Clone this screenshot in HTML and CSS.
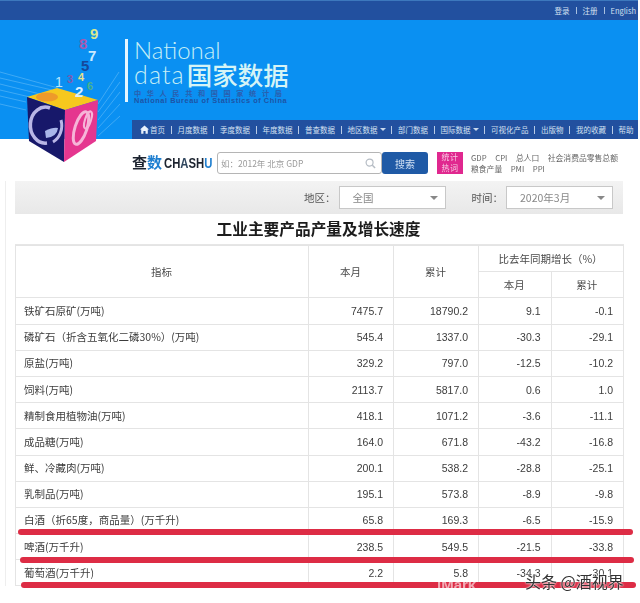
FILE: index.html
```html
<!DOCTYPE html>
<html lang="zh">
<head>
<meta charset="utf-8">
<title>国家数据</title>
<link rel="stylesheet" href="styles.css">
</head>
<body>
<div class="page">
  <header class="top">
    <div class="topbar"><span>登录</span><i></i><span>注册</span><i></i><span>English</span></div>
    <div class="hero">
      <div class="brand">
        <div class="brand-bar"></div>
        <div class="brand-text">
          <div class="b-en">National</div>
          <div class="b-line"><span class="b-en b-data">data</span><span class="b-cn">国家数据</span></div>
          <div class="b-sub1">中华人民共和国国家统计局</div>
          <div class="b-sub2">National Bureau of Statistics of China</div>
        </div>
      </div>
      <nav class="nav">
        <svg class="home" viewBox="0 0 12 11"><path d="M6 0 0 5.6h1.6V11h3V7.4h2.8V11h3V5.6H12z" fill="#e8f1fb"/></svg>
        <a>首页</a><i></i><a>月度数据</a><i></i><a>季度数据</a><i></i><a>年度数据</a><i></i><a>普查数据</a><i></i><a>地区数据<b></b></a><i></i><a>部门数据</a><i></i><a>国际数据<b></b></a><i></i><a>可视化产品</a><i></i><a>出版物</a><i></i><a>我的收藏</a><i></i><a>帮助</a>
      </nav>
    </div>
    <svg class="cube" viewBox="0 0 125 165">
      <g stroke="#8fd0fa" stroke-width="0.8" opacity="0.5" fill="none">
        <path d="M0 72 58 88M0 78 52 90M0 84 40 94M0 90 30 97M0 96 26 102M0 104 26 110"/>
        <path d="M98 104 119 72M98 112 120 82M98 120 120 92M98 128 120 104M98 136 120 116"/>
      </g>
      <polygon points="27,97 57,88 98,100 65,110" fill="#f6c81e"/>
      <ellipse cx="47" cy="97" rx="11" ry="4.5" fill="#ee9a2a"/>
      <polygon points="27,97 65,110 64,162 29,141" fill="#17186a"/>
      <polygon points="65,110 98,100 96,141 64,162" fill="#e5368f"/>
      <path d="M50 108A15 18 0 1 0 47 143" fill="none" stroke="#b9b6e6" stroke-width="3.5"/>
      <path d="M61 120A15 18 0 0 1 53 142" fill="none" stroke="#b9b6e6" stroke-width="3"/>
      <path d="M45 131q8-4 13-3q-1 9-12 10z" fill="#a9b6ea"/>
      <ellipse cx="81" cy="128" rx="6" ry="17" fill="none" stroke="#f6b5d8" stroke-width="3" transform="rotate(18 81 128)"/>
      <ellipse cx="88" cy="120" rx="3" ry="9" fill="none" stroke="#f6b5d8" stroke-width="2" transform="rotate(18 88 120)"/>
      <text x="55" y="87" class="n1" fill="#b9e6ff">1</text>
      <text x="75" y="97" class="n2" fill="#d9f0ff">2</text>
      <text x="67" y="83" class="n3" fill="#7f5ab0">3</text>
      <text x="78" y="81" class="n3" fill="#e7e08a">4</text>
      <text x="81" y="71" class="n2" fill="#16489a">5</text>
      <text x="87" y="90" class="n3" fill="#49b28c">6</text>
      <text x="88" y="61" class="n2" fill="#c9eaff">7</text>
      <text x="79" y="49" class="n2" fill="#a85ab0">8</text>
      <text x="90" y="39" class="n2" fill="#d8e890">9</text>
    </svg>
  </header>

  <div class="search-row">
    <div class="cs-logo"><span class="cs-a">查</span><span class="cs-b">数</span><span class="cs-en"><span class="cs-a">CH</span><span class="cs-c">A</span><span class="cs-a">SH</span><span class="cs-b">U</span></span></div>
    <div class="search-box"><span>如：2012年 北京 GDP</span>
      <svg class="mag" viewBox="0 0 12 12"><circle cx="5" cy="5" r="3.8" fill="none" stroke="#b5bcc4" stroke-width="1.3"/><path d="M8 8l3 3" stroke="#b5bcc4" stroke-width="1.6"/></svg>
    </div>
    <button class="search-btn">搜索</button>
    <div class="hot">统计<br>热词</div>
    <div class="hot-links">
      <div><span>GDP</span><span>CPI</span><span>总人口</span><span>社会消费品零售总额</span></div>
      <div><span>粮食产量</span><span>PMI</span><span>PPI</span></div>
    </div>
  </div>

  <main class="main">
    <div class="filter">
      <label>地区：</label>
      <div class="sel sel-a">全国<b></b></div>
      <label>时间：</label>
      <div class="sel sel-b">2020年3月<b></b></div>
    </div>
    <table>
      <caption>工业主要产品产量及增长速度</caption>
      <colgroup><col class="c1"><col class="c2"><col class="c2"><col class="c3"><col class="c3"></colgroup>
      <thead>
        <tr><th rowspan="2">指标</th><th rowspan="2">本月</th><th rowspan="2">累计</th><th colspan="2">比去年同期增长（%）</th></tr>
        <tr><th>本月</th><th>累计</th></tr>
      </thead>
      <tbody>
        <tr><td>铁矿石原矿(万吨)</td><td>7475.7</td><td>18790.2</td><td>9.1</td><td>-0.1</td></tr>
        <tr><td>磷矿石（折含五氧化二磷30%）(万吨)</td><td>545.4</td><td>1337.0</td><td>-30.3</td><td>-29.1</td></tr>
        <tr><td>原盐(万吨)</td><td>329.2</td><td>797.0</td><td>-12.5</td><td>-10.2</td></tr>
        <tr><td>饲料(万吨)</td><td>2113.7</td><td>5817.0</td><td>0.6</td><td>1.0</td></tr>
        <tr><td>精制食用植物油(万吨)</td><td>418.1</td><td>1071.2</td><td>-3.6</td><td>-11.1</td></tr>
        <tr><td>成品糖(万吨)</td><td>164.0</td><td>671.8</td><td>-43.2</td><td>-16.8</td></tr>
        <tr><td>鲜、冷藏肉(万吨)</td><td>200.1</td><td>538.2</td><td>-28.8</td><td>-25.1</td></tr>
        <tr><td>乳制品(万吨)</td><td>195.1</td><td>573.8</td><td>-8.9</td><td>-9.8</td></tr>
        <tr><td>白酒（折65度，商品量）(万千升)</td><td>65.8</td><td>169.3</td><td>-6.5</td><td>-15.9</td></tr>
        <tr><td>啤酒(万千升)</td><td>238.5</td><td>549.5</td><td>-21.5</td><td>-33.8</td></tr>
        <tr><td>葡萄酒(万千升)</td><td>2.2</td><td>5.8</td><td>-34.3</td><td>-30.1</td></tr>
      </tbody>
    </table>
  </main>

  <div class="mark mark-1"></div>
  <div class="mark mark-2"></div>
  <div class="mark mark-3"></div>
  <div class="wm-a">iMark</div>
  <div class="wm-b">头条 @酒视界</div>
</div>
</body>
</html>
```

FILE: styles.css
```css
* { box-sizing: border-box; }
html, body { margin: 0; background: #fff; }
body { font-family: "Liberation Sans", "Noto Sans CJK SC", sans-serif; color: #444; }
.page { position: relative; width: 640px; height: 603px; overflow: hidden; filter: blur(0.45px); }

.top { position: relative; width: 638px; }
.topbar { height: 20px; background: #22509f; border-top: 1px solid #3d78bd; display: flex; justify-content: flex-end; align-items: center; gap: 6px; padding-right: 2px; font-size: 7.5px; color: #d5e2f2; }
.topbar span { font-family: "Noto Sans CJK SC", sans-serif; }
.topbar i { width: 1px; height: 7px; background: #a8c0e0; }
.hero { height: 119px; background: #0a90f2; position: relative; display: flex; flex-direction: column; justify-content: flex-end; align-items: flex-end; }
.brand { position: absolute; left: 125px; top: 19px; display: flex; gap: 6px; }
.brand-bar { width: 3px; height: 63px; background: #e6f6ff; }
.brand-text { color: #c8f0f5; line-height: 1; }
.b-en { font-family: Lato, "Open Sans", sans-serif; font-weight: 300; font-size: 24px; line-height: 22px; height: 22px; color: #c6eef6; }
.b-data { letter-spacing: 1.1px; font-size: 25px; height: 26px; line-height: 26px; }
.b-line { display: flex; align-items: center; height: 26px; }
.b-cn { font-family: "Noto Sans CJK SC", sans-serif; font-size: 25.5px; font-weight: 500; line-height: 26px; color: #d5f4f6; margin-left: 2px; }
.b-sub1 { font-family: "Noto Sans CJK SC", sans-serif; font-weight: 700; font-size: 7.2px; letter-spacing: 5.6px; line-height: 8px; margin-top: 2px; color: #2a5fae; white-space: nowrap; }
.b-sub2 { font-weight: 700; font-size: 7.4px; letter-spacing: 0.55px; line-height: 8px; color: #1e54a6; white-space: nowrap; }
.nav { width: 506px; height: 19px; background: #22509f; display: flex; align-items: center; padding-left: 8px; font-size: 7.5px; color: #d3e0f1; font-family: "Noto Sans CJK SC", sans-serif; white-space: nowrap; }
.home { width: 9px; height: 9px; margin-right: 1px; flex: none; }
.nav a { display: flex; align-items: center; }
.nav i { width: 1px; height: 8px; background: #b8cbe6; margin: 0 6px 0 5.5px; }
.nav b { width: 0; height: 0; border: 3px solid transparent; border-top: 3px solid #c9d8ec; border-bottom: 0; margin-left: 2px; }
.cube { position: absolute; left: 0; top: 0; width: 125px; height: 165px; overflow: visible; }
.cube text { font-family: "Liberation Sans", sans-serif; }
.n1 { font-size: 14px; }
.n2 { font-size: 15px; font-weight: 700; }
.n3 { font-size: 11px; font-weight: 700; }

.search-row { height: 42px; display: flex; align-items: flex-start; padding: 13px 0 0 132px; }
.cs-logo { width: 85px; height: 20px; line-height: 20px; font-size: 15px; font-weight: 700; white-space: nowrap; font-family: "Noto Sans CJK SC", sans-serif; }
.cs-en { display: inline-block; font-family: "Liberation Sans", sans-serif; font-size: 15.5px; margin-left: 2px; transform: scaleX(0.73); transform-origin: left center; }
.cs-a { color: #1d2430; }
.cs-b { color: #1f7fd0; }
.cs-c { color: #31475f; }
.search-box { width: 165px; height: 22px; border: 1px solid #b5b5b5; border-radius: 3px; display: flex; align-items: center; justify-content: space-between; padding: 0 5px 0 3px; font-size: 8.5px; color: #9a9a9a; font-family: "Noto Sans CJK SC", sans-serif; }
.mag { width: 11px; height: 11px; }
.search-btn { width: 46px; height: 22px; border: 0; border-radius: 3px; background: #1f5aa6; color: #cfe0f3; font-size: 10px; font-family: "Noto Sans CJK SC", sans-serif; padding: 0; }
.hot { width: 26px; height: 22px; margin-left: 9px; background: #e0288f; color: #f8c9e3; font-size: 8px; line-height: 10.5px; text-align: center; font-family: "Noto Sans CJK SC", sans-serif; letter-spacing: 0.5px; }
.hot-links { margin: 0 0 0 8px; font-size: 7.8px; line-height: 11px; color: #666; font-family: "Noto Sans CJK SC", sans-serif; }
.hot-links div { display: flex; gap: 8.5px; white-space: nowrap; }

.main { margin-left: 5px; padding-left: 9px; width: 618px; border-left: 1px solid #eee; }
.filter { height: 33px; background: linear-gradient(#f3f3f3, #e8e8e8); display: flex; align-items: center; justify-content: flex-end; padding-right: 10px; font-size: 10.5px; color: #555; font-family: "Noto Sans CJK SC", sans-serif; }
.filter label { margin-right: 3px; }
.sel { height: 23px; background: #fff; border: 1px solid #c8c8c8; display: flex; align-items: center; justify-content: space-between; padding: 0 7px 0 13px; color: #888; }
.sel-a { width: 107px; margin-right: 26px; }
.sel-b { width: 107px; }
.sel b { width: 0; height: 0; border: 4px solid transparent; border-top: 4px solid #888; border-bottom: 0; }
table { width: 608px; border-collapse: collapse; table-layout: fixed; font-size: 10.5px; color: #3c3c3c; }
caption { height: 31px; line-height: 30px; font-size: 15.7px; font-weight: 700; color: #1c1c1c; font-family: "Noto Sans CJK SC", sans-serif; background: #fff; border-bottom: 1px solid #e6e6e6; padding-right: 2px; }
.c1 { width: 293px; } .c2 { width: 85px; } .c3 { width: 72.5px; }
th, td { border: 1px solid #e4e4e4; height: 26.2px; padding: 0 9px 0 8px; line-height: 14px; overflow: hidden; white-space: nowrap; }
th { font-weight: 400; font-family: "Noto Sans CJK SC", sans-serif; text-align: center; color: #4a4a4a; }
td { text-align: right; }
td:first-child { text-align: left; font-family: "Noto Sans CJK SC", "Liberation Sans", sans-serif; }
tbody td { padding-right: 10px; }

.mark { position: absolute; height: 5.5px; border-radius: 3px; background: #dd2c45; }
.mark-1 { left: 18px; top: 529px; width: 615px; }
.mark-2 { left: 20px; top: 557px; width: 614px; }
.mark-3 { left: 21px; top: 582px; width: 615px; }
.wm-a { position: absolute; left: 437px; top: 576px; font-size: 15px; font-weight: 700; color: #fff; opacity: 0.6; }
.wm-b { position: absolute; left: 525px; top: 569px; font-size: 16px; color: #333; font-family: "Noto Sans CJK SC", sans-serif; text-shadow: 0 0 2px #fff, 0 0 2px #fff; white-space: nowrap; }
```
